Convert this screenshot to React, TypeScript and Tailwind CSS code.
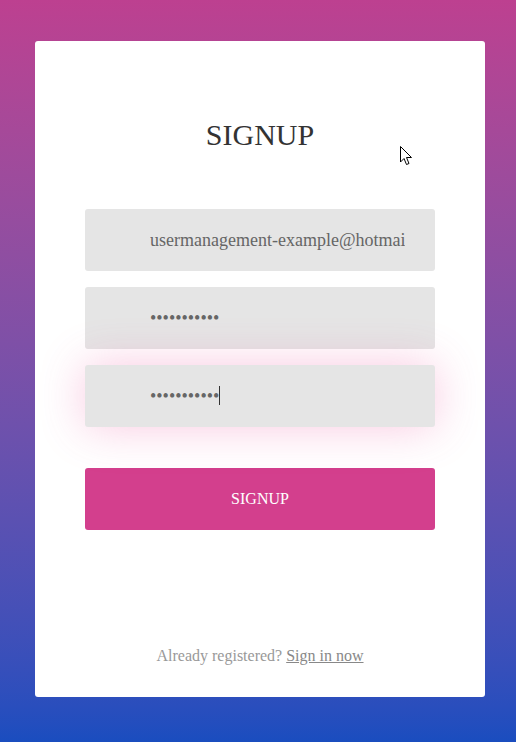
import { useState } from "react";

// Signup card over a pink-to-blue page gradient; the last password field is
// shown focused with its pink glow.
export default function App() {
  const [email, setEmail] = useState("usermanagement-example@hotmail.com");
  const [password, setPassword] = useState("12345678901");
  const [confirm, setConfirm] = useState("12345678901");

  const inputClass =
    "block h-[62px] w-[350px] rounded-[3px] bg-[#e5e5e5] pl-[65px] pr-[30px] text-[18px] text-[#666] outline-none";

  return (
    <div
      className="relative h-[742px] overflow-hidden bg-gradient-to-b from-[#bd4090] to-[#1a4dbf] pt-[41px]"
      style={{ fontFamily: '"Liberation Serif", "Times New Roman", serif' }}
    >
      <div className="ml-[35px] flex h-[656px] w-[450px] flex-col items-center rounded-[3px] bg-white pt-[79px] pb-[29px]">
        <h1 className="text-[30px] leading-[30px] text-[#333]">SIGNUP</h1>

        <form className="mt-[59px] flex flex-col gap-4" onSubmit={(e) => e.preventDefault()}>
          <input
            type="email"
            value={email}
            onChange={(e) => setEmail(e.target.value)}
            className={inputClass}
          />
          <input
            type="password"
            value={password}
            onChange={(e) => setPassword(e.target.value)}
            className={inputClass}
          />
          <div className="relative">
            <input
              type="password"
              value={confirm}
              onChange={(e) => setConfirm(e.target.value)}
              className={`${inputClass} shadow-[0_0_45px_rgba(236,72,153,0.3)]`}
            />
            <span className="absolute left-[134px] top-[21px] h-[19px] w-px bg-[#333]" />
          </div>
          <button
            type="submit"
            className="mt-[25px] h-[62px] w-[350px] rounded-[3px] bg-[#d33f8d] text-[16px] text-white"
          >
            SIGNUP
          </button>
        </form>

        <p className="mt-auto text-[16px] leading-6 text-[#999]">
          Already registered?{" "}
          <a href="#" className="text-[#888] underline">
            Sign in now
          </a>
        </p>
      </div>

      <svg
        className="absolute left-[400px] top-[146px]"
        width="13"
        height="20"
        viewBox="0 0 13 20"
      >
        <path
          d="M0.5 0.5 L0.5 16 L4 12.5 L6.5 18.5 L9 17.5 L6.5 11.5 L11.5 11.5 Z"
          fill="white"
          stroke="black"
          strokeWidth="1"
          strokeLinejoin="miter"
        />
      </svg>
    </div>
  );
}
